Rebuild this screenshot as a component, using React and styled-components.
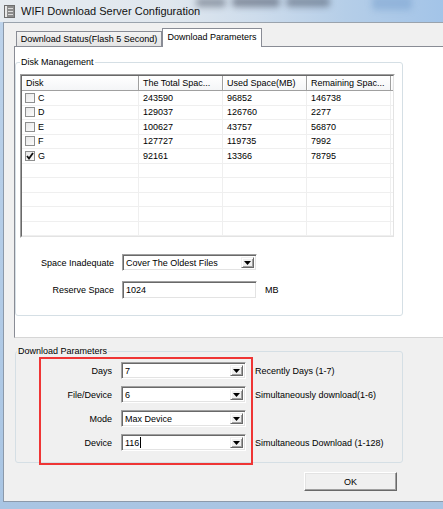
import React from 'react';
import styled, { createGlobalStyle } from 'styled-components';

const GlobalStyle = createGlobalStyle`
  html, body {
    margin: 0;
    padding: 0;
    background: #b9cfe6;
  }
  body {
    font-family: 'Liberation Sans', Arial, sans-serif;
    font-size: 9px;
    color: #000;
  }
  * {
    box-sizing: border-box;
  }
`;

const Window = styled.div`
  width: 443px;
  height: 509px;
  display: flex;
  flex-direction: column;
  overflow: hidden;
  background: #b7cde5;
`;

const TitleBar = styled.div`
  position: relative;
  flex: none;
  height: 22px;
  display: flex;
  align-items: center;
  gap: 6px;
  padding-left: 4px;
  overflow: hidden;
  background: linear-gradient(
    90deg,
    #e6ebf0 0%,
    #e0e7ee 38%,
    #cddcec 58%,
    #b5cee8 78%,
    #a3c4e8 100%
  );
`;

// blurred desktop behind the glass title bar
const GlassBlob = styled.span`
  position: absolute;
  left: ${(p) => p.$left}px;
  top: ${(p) => p.$top}px;
  width: ${(p) => p.$width}px;
  height: ${(p) => p.$height}px;
  border-radius: 4px;
  background: ${(p) => p.$color};
  filter: blur(3px);
`;

const TitleText = styled.span`
  position: relative;
  font-size: 11px;
  color: #111;
  white-space: nowrap;
`;

const Frame = styled.div`
  flex: 1;
  display: flex;
  padding: 0 0 7px 3px;
  background: linear-gradient(180deg, #bcd2ea 0%, #a9c5e3 100%);
`;

const Client = styled.div`
  flex: 1;
  display: flex;
  flex-direction: column;
  padding: 5px 0 0 10px;
  background: #f0f0f0;
  border-top: 1px solid #9aa3ad;
  border-left: 1px solid #8b99aa;
  border-bottom: 1px solid #8b99aa;
  overflow: hidden;
`;

const TabStrip = styled.div`
  display: flex;
  align-items: flex-end;
  height: 18px;
  padding-left: 2px;
`;

const Tab = styled.div`
  position: relative;
  display: flex;
  align-items: center;
  justify-content: center;
  width: ${(p) => p.$width}px;
  height: ${(p) => (p.$active ? 19 : 15)}px;
  margin-bottom: ${(p) => (p.$active ? -1 : 0)}px;
  padding-bottom: ${(p) => (p.$active ? 2 : 0)}px;
  border: 1px solid #898c95;
  border-bottom: none;
  background: ${(p) =>
    p.$active ? '#fff' : 'linear-gradient(180deg, #f3f3f3 0%, #e4e4e4 100%)'};
  z-index: ${(p) => (p.$active ? 1 : 0)};
  white-space: nowrap;
`;

const TabPanel = styled.div`
  height: 292px;
  margin-right: -20px;
  padding-top: 9px;
  background: #fff;
  border: 1px solid #898c95;
  border-bottom-color: #d6d6d6;
`;

const GroupBox = styled.fieldset`
  width: 388px;
  height: ${(p) => p.$height}px;
  margin: 0;
  padding: ${(p) => p.$padding};
  border: 1px solid #d5dfe5;
  border-radius: 3px;
`;

const GroupTitle = styled.legend`
  padding: 0 1px;
  margin-left: ${(p) => p.$offset || 0}px;
  line-height: 12px;
  font-size: 9px;
`;

const ListOuter = styled.div`
  width: 375px;
  height: 164px;
  margin-top: 6px;
  border: 1px solid;
  border-color: #a0a0a0 #fff #fff #a0a0a0;
`;

const ListInner = styled.div`
  height: 100%;
  border: 1px solid;
  border-color: #696969 #e3e3e3 #e3e3e3 #696969;
  background: #fff;
  overflow: hidden;
`;

const ListRow = styled.div`
  display: grid;
  grid-template-columns: 117px 84px 84px 84px 1fr;
  height: ${(p) => (p.$header ? 15 : 14.5)}px;
`;

const HeaderCell = styled.div`
  display: flex;
  align-items: center;
  padding: 0 4px;
  background: linear-gradient(180deg, #fff 0%, #f4f5f7 100%);
  border-right: 1px solid #a0a0a0;
  border-bottom: 1px solid #a0a0a0;
  box-shadow: inset 1px 1px 0 #fff;
  white-space: nowrap;
  overflow: hidden;
`;

const Cell = styled.div`
  display: flex;
  align-items: center;
  gap: 3px;
  padding: 0 4px;
  border-right: 1px solid #efefef;
  border-bottom: 1px solid #efefef;
  white-space: nowrap;
`;

const Check = styled.span`
  width: 10px;
  height: 10px;
  margin-left: -1px;
  display: inline-flex;
  align-items: center;
  justify-content: center;
  border: 1px solid #8e8f8f;
  background: linear-gradient(135deg, #e8e8e8 0%, #fbfbfb 100%);
`;

const FormGrid = styled.div`
  display: grid;
  grid-template-columns: ${(p) => p.$columns};
  grid-auto-rows: auto;
  column-gap: ${(p) => p.$gap}px;
  row-gap: ${(p) => p.$rowGap}px;
  align-items: center;
  margin-top: ${(p) => p.$top}px;
`;

const FieldLabel = styled.span`
  text-align: right;
  white-space: nowrap;
`;

const Hint = styled.span`
  white-space: nowrap;
`;

const Sunken = styled.div`
  display: flex;
  align-items: center;
  height: ${(p) => p.$height}px;
  padding: 2px 2px 2px 3px;
  background: #fff;
  border: 1px solid;
  border-color: #a0a0a0 #fff #fff #a0a0a0;
  box-shadow: inset 1px 1px 0 #696969, inset -1px -1px 0 #e3e3e3;
  white-space: nowrap;
`;

const ComboText = styled.span`
  flex: 1;
  display: flex;
  align-items: center;
`;

const Caret = styled.span`
  width: 1px;
  height: 11px;
  background: #000;
  margin-left: 1px;
`;

const DropButton = styled.span`
  flex: none;
  width: 13px;
  align-self: stretch;
  display: flex;
  align-items: center;
  justify-content: center;
  background: #f0f0f0;
  border: 1px solid;
  border-color: #f0f0f0 #696969 #696969 #f0f0f0;
  box-shadow: inset 1px 1px 0 #fff, inset -1px -1px 0 #a0a0a0;
`;

const ParamsArea = styled.div`
  position: relative;
  margin: 7px 0 0 1px;
`;

const Highlight = styled.div`
  position: absolute;
  left: 24px;
  top: 12px;
  width: 214px;
  height: 108px;
  border: 2px solid #ef3535;
  pointer-events: none;
`;

const ButtonRow = styled.div`
  display: flex;
  justify-content: flex-end;
  width: 388px;
  margin: 9px 0 0 1px;
  padding-right: 6px;
`;

const PushButton = styled.button`
  width: 93px;
  height: 19px;
  padding: 0;
  font-family: inherit;
  font-size: 9px;
  color: #000;
  background: #f0f0f0;
  border: 1px solid;
  border-color: #fff #696969 #696969 #fff;
  box-shadow: inset -1px -1px 0 #a0a0a0, inset 1px 1px 0 #e3e3e3;
`;

const AppIcon = () => (
  <svg width="11" height="13" viewBox="0 0 11 13">
    <rect x="0.5" y="0.5" width="10" height="12" fill="#8c8c8c" stroke="#6e6e6e" />
    <rect x="1" y="1" width="2" height="11" fill="#e9e9e9" />
    <rect x="4" y="3" width="5" height="1" fill="#dcdcdc" />
    <rect x="4" y="6" width="5" height="1" fill="#dcdcdc" />
    <rect x="4" y="9" width="5" height="1" fill="#dcdcdc" />
  </svg>
);

const Arrow = () => (
  <svg width="7" height="4" viewBox="0 0 7 4">
    <polygon points="0,0 7,0 3.5,4" fill="#000" />
  </svg>
);

const Tick = () => (
  <svg width="8" height="8" viewBox="0 0 8 8">
    <path d="M1 4 L3 6.5 L7 1" fill="none" stroke="#111" strokeWidth="1.8" />
  </svg>
);

function Combo({ value, height = 17, caret }) {
  return (
    <Sunken $height={height}>
      <ComboText>
        {value}
        {caret && <Caret />}
      </ComboText>
      <DropButton>
        <Arrow />
      </DropButton>
    </Sunken>
  );
}

const disks = [
  { name: 'C', total: '243590', used: '96852', free: '146738' },
  { name: 'D', total: '129037', used: '126760', free: '2277' },
  { name: 'E', total: '100627', used: '43757', free: '56870' },
  { name: 'F', total: '127727', used: '119735', free: '7992' },
  { name: 'G', total: '92161', used: '13366', free: '78795', checked: true },
];

const emptyRows = Array.from({ length: 6 });

const params = [
  { label: 'Days', value: '7', hint: 'Recently Days (1-7)' },
  { label: 'File/Device', value: '6', hint: 'Simultaneously download(1-6)' },
  { label: 'Mode', value: 'Max Device', hint: '' },
  { label: 'Device', value: '116', hint: 'Simultaneous Download (1-128)', caret: true },
];

const glassBlobs = [
  { left: 196, top: -2, width: 30, height: 9, color: 'rgba(60, 68, 84, 0.45)' },
  { left: 232, top: -3, width: 48, height: 10, color: 'rgba(55, 64, 82, 0.5)' },
  { left: 286, top: -3, width: 44, height: 10, color: 'rgba(55, 64, 82, 0.45)' },
  { left: 372, top: -4, width: 40, height: 14, color: 'rgba(120, 160, 205, 0.5)' },
];

function App() {
  return (
    <>
      <GlobalStyle />
      <Window>
        <TitleBar>
          {glassBlobs.map((blob, i) => (
            <GlassBlob
              key={i}
              $left={blob.left}
              $top={blob.top}
              $width={blob.width}
              $height={blob.height}
              $color={blob.color}
            />
          ))}
          <AppIcon />
          <TitleText>WIFI Download Server Configuration</TitleText>
        </TitleBar>
        <Frame>
          <Client>
            <TabStrip>
              <Tab $width={146}>Download Status(Flash 5 Second)</Tab>
              <Tab $width={100} $active>
                Download Parameters
              </Tab>
            </TabStrip>
            <TabPanel>
              <GroupBox $height={260} $padding='0 6px 15px 4px'>
                <GroupTitle>Disk Management</GroupTitle>
                <ListOuter>
                  <ListInner>
                    <ListRow $header>
                      <HeaderCell>Disk</HeaderCell>
                      <HeaderCell>The Total Spac...</HeaderCell>
                      <HeaderCell>Used Space(MB)</HeaderCell>
                      <HeaderCell>Remaining Spac...</HeaderCell>
                      <HeaderCell />
                    </ListRow>
                    {disks.map((disk) => (
                      <ListRow key={disk.name}>
                        <Cell>
                          <Check>{disk.checked && <Tick />}</Check>
                          {disk.name}
                        </Cell>
                        <Cell>{disk.total}</Cell>
                        <Cell>{disk.used}</Cell>
                        <Cell>{disk.free}</Cell>
                        <Cell />
                      </ListRow>
                    ))}
                    {emptyRows.map((_, i) => (
                      <ListRow key={`empty-${i}`}>
                        <Cell />
                        <Cell />
                        <Cell />
                        <Cell />
                        <Cell />
                      </ListRow>
                    ))}
                  </ListInner>
                </ListOuter>
                <FormGrid $columns='94px 135px auto' $gap={8} $rowGap={10} $top={16}>
                  <FieldLabel>Space Inadequate</FieldLabel>
                  <Combo value='Cover The Oldest Files' />
                  <span />
                  <FieldLabel>Reserve Space</FieldLabel>
                  <Sunken $height={18}>1024</Sunken>
                  <Hint>MB</Hint>
                </FormGrid>
              </GroupBox>
            </TabPanel>
            <ParamsArea>
              <GroupBox $height={118} $padding='5px 0 0 0'>
                <GroupTitle $offset={1}>Download Parameters</GroupTitle>
                <FormGrid $columns='96px 125px auto' $gap={9} $rowGap={7} $top={0}>
                  {params.map((row) => (
                    <React.Fragment key={row.label}>
                      <FieldLabel>{row.label}</FieldLabel>
                      <Combo value={row.value} caret={row.caret} />
                      <Hint>{row.hint}</Hint>
                    </React.Fragment>
                  ))}
                </FormGrid>
              </GroupBox>
              <Highlight />
            </ParamsArea>
            <ButtonRow>
              <PushButton>OK</PushButton>
            </ButtonRow>
          </Client>
        </Frame>
      </Window>
    </>
  );
}

export default App;
